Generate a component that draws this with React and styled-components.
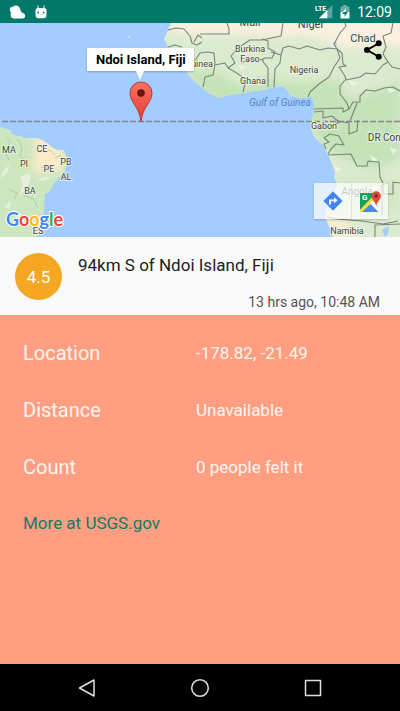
import React from "react";
import styled, { createGlobalStyle } from "styled-components";

const GlobalStyle = createGlobalStyle`
  *, *::before, *::after { box-sizing: border-box; }
  body { margin: 0; font-family: Roboto, "Liberation Sans", sans-serif; background: #000; }
  dl, dd, dt, h1, p { margin: 0; }
`;

const Screen = styled.div`
  display: flex;
  flex-direction: column;
  min-height: 100vh;
  background: #ff9e80;
`;

const StatusBar = styled.header`
  display: flex;
  align-items: center;
  justify-content: space-between;
  height: 23px;
  padding: 0 8px 0 9px;
  background: #00796b;
  color: #fff;
`;

const StatusGroup = styled.div`
  display: flex;
  align-items: center;
  gap: ${(p) => p.$gap}px;
`;

const Clock = styled.time`
  font-size: 14px;
  line-height: 23px;
  padding-top: 2px;
`;

const MapArea = styled.section`
  position: relative;
  height: 214px;
  overflow: hidden;
  background: #a3ccff;
`;

const MapDrawing = styled.svg`
  display: block;
  width: 100%;
  height: 100%;
`;

const Callout = styled.div`
  position: absolute;
  top: 25px;
  left: 87px;
  padding: 1px 8px 0 9px;
  background: #fff;
  color: #000;
  font-size: 13px;
  font-weight: 700;
  line-height: 22px;
  white-space: nowrap;
  box-shadow: 0 1px 2px rgba(0, 0, 0, 0.25);

  &::after {
    content: "";
    position: absolute;
    top: 100%;
    left: 50%;
    margin-left: -4px;
    border: 4px solid transparent;
    border-top: 9px solid #fff;
    border-bottom: 0;
  }
`;

const ShareButton = styled.button`
  position: absolute;
  top: 12px;
  right: 12px;
  display: grid;
  place-items: center;
  width: 30px;
  height: 30px;
  padding: 0;
  border: 0;
  background: none;
`;

const MapTools = styled.div`
  position: absolute;
  right: 12px;
  bottom: 18px;
  display: flex;
  background: rgba(255, 255, 255, 0.7);
  box-shadow: 0 1px 2px rgba(0, 0, 0, 0.2);
`;

const MapTool = styled.button`
  display: grid;
  place-items: center;
  width: 37px;
  height: 36px;
  padding: 0;
  border: 0;
  background: none;

  & + & {
    border-left: 1px solid rgba(0, 0, 0, 0.08);
  }
`;

const Summary = styled.section`
  display: flex;
  gap: 16px;
  height: 78px;
  padding: 16px 20px 4px 15px;
  background: #fafafa;
`;

const Magnitude = styled.div`
  display: grid;
  place-items: center;
  flex: none;
  width: 47px;
  height: 47px;
  border-radius: 50%;
  background: #f5a623;
  color: #fff;
  font-size: 17px;
`;

const SummaryText = styled.div`
  display: flex;
  flex: 1;
  flex-direction: column;
  justify-content: space-between;
`;

const Place = styled.h1`
  color: #212121;
  font-size: 17px;
  font-weight: 400;
  line-height: 24px;
`;

const When = styled.p`
  color: #555;
  font-size: 14px;
  line-height: 18px;
  text-align: right;
`;

const Details = styled.main`
  flex: 1;
  padding: 9px 24px 0 23px;
  color: #fff5f1;
`;

const DetailRow = styled.div`
  display: grid;
  grid-template-columns: 49% 1fr;
  align-items: center;
  min-height: 57px;
`;

const Label = styled.dt`
  font-size: 20px;
`;

const Value = styled.dd`
  font-size: 17px;
`;

const MoreLink = styled.a`
  display: inline-block;
  color: #0e7c6c;
  font-size: 17px;
  line-height: 57px;
  text-decoration: none;
`;

const NavBar = styled.nav`
  display: flex;
  justify-content: center;
  gap: 65px;
  height: 47px;
  background: #000;
`;

const NavButton = styled.button`
  display: grid;
  place-items: center;
  width: 48px;
  height: 47px;
  padding: 0;
  border: 0;
  background: none;
`;

const CloudIcon = () => (
  <svg width="17" height="14" viewBox="0 0 17 14" fill="#fff" aria-hidden="true">
    <circle cx="7" cy="5" r="4.4" />
    <circle cx="3.8" cy="4.8" r="3" />
    <circle cx="5" cy="9.8" r="3.5" />
    <path d="M4 5.500h7.300l2.200 2.500c1.700.2 2.700 1.300 2.700 2.700 0 1.700-1.200 2.700-2.800 2.700H4z" />
  </svg>
);

const AndroidIcon = () => (
  <svg width="12" height="14" viewBox="0 0 12 14" aria-hidden="true">
    <path d="M2.700 0.500 3.500 4M9.300.5 8.500 4" stroke="#fff" strokeWidth="1" />
    <path d="M0.500 5.500Q.5 3 3 3h6q2.500 0 2.500 2.500v4.500Q11.500 13.300 8.200 13.300H3.800Q.5 13.300.5 10z" fill="#fff" />
    <circle cx="3.300" cy="7.500" r="0.900" fill="#00796b" />
    <circle cx="8.700" cy="7.500" r="0.900" fill="#00796b" />
    <path d="M4.500 9.500h3" stroke="#8cc5be" strokeWidth="0.600" />
  </svg>
);

const SignalIcon = () => (
  <svg width="18" height="15" viewBox="0 0 18 15" aria-hidden="true">
    <path d="M17.300 1v13.300H4z" fill="#5aa59b" />
    <path d="M12.300 6v8.300H4z" fill="#fff" />
    <text x="0" y="7" fill="#fff" fontFamily="Roboto, sans-serif" fontSize="7" fontWeight="700">LTE</text>
  </svg>
);

const BatteryIcon = () => (
  <svg width="10" height="14" viewBox="0 0 10 14" aria-hidden="true">
    <path d="M3 0h4v1.500h2.500V7h-9V1.500H3z" fill="#68aca3" />
    <path d="M.5 7h9v6.500h-9z" fill="#fff" />
    <path d="M4.800 7h3L4.600 12V9H2.300L3.500 7z" fill="#00796b" />
    <path d="M5.700 3 2.900 7h2.600z" fill="#fff" />
  </svg>
);

const ShareIcon = () => (
  <svg width="20" height="22" viewBox="0 0 20 22" aria-hidden="true">
    <path d="M15.500 4.500 4 11l11.500 6.500" fill="none" stroke="#000" strokeWidth="2" />
    <circle cx="15.700" cy="4.300" r="3" />
    <circle cx="4" cy="11" r="3" />
    <circle cx="15.700" cy="17.700" r="3" />
  </svg>
);

const DirectionsIcon = () => (
  <svg width="20" height="20" viewBox="0 0 20 20" aria-hidden="true">
    <path d="M10 .8 19.200 10 10 19.200.8 10z" fill="#4285f4" stroke="#4285f4" strokeLinejoin="round" />
    <path d="M7 13.500V9.300h4.500" fill="none" stroke="#fff" strokeWidth="1.800" />
    <path d="M11 6.200v6l3.600-3z" fill="#fff" />
  </svg>
);

const MapsIcon = () => (
  <svg width="23" height="23" viewBox="0 0 23 23" aria-hidden="true">
    <path d="M1 3h19v19H1z" fill="#e5e7e8" />
    <path d="M1 3h17L1 20z" fill="#17a05d" />
    <path d="M1 20v2h3L20 6l-3-3z" fill="#fedb43" />
    <path d="M3 22l8.500-8 8 8z" fill="#4a89f3" />
    <path d="M11 13l2-2 7 8v3z" fill="#fff" />
    <text x="3" y="10" fill="#fff" fontFamily="Roboto, sans-serif" fontSize="8" fontWeight="700">G</text>
    <path d="M12.500 6a4.700 4.700 0 0 1 9.400 0c0 3.500-3.900 5-4.700 10-.8-5-4.700-6.500-4.700-10z" fill="#dc4b3e" />
    <circle cx="17.200" cy="6" r="1.700" fill="#7d231c" />
  </svg>
);

const placeLabels = [
  { text: "Mali", x: 250, y: 26, size: 11 },
  { text: "Niger", x: 311, y: 28, size: 11 },
  { text: "Chad", x: 363, y: 42, size: 11 },
  { text: "Burkina", x: 250, y: 52, size: 9 },
  { text: "Faso", x: 250, y: 62, size: 9 },
  { text: "Guinea", x: 199, y: 67, size: 9 },
  { text: "Nigeria", x: 304, y: 73, size: 9 },
  { text: "Ghana", x: 253, y: 84, size: 9 },
  { text: "Gabon", x: 324, y: 129, size: 9 },
  { text: "DR Congo", x: 390, y: 141, size: 10 },
  { text: "Angola", x: 357, y: 195, size: 10 },
  { text: "Namibia", x: 347, y: 234, size: 9 },
  { text: "MA", x: 9, y: 153, size: 9 },
  { text: "CE", x: 42, y: 152, size: 9 },
  { text: "PI", x: 24, y: 167, size: 9 },
  { text: "PE", x: 49, y: 172, size: 9 },
  { text: "PB", x: 66, y: 165, size: 9 },
  { text: "AL", x: 66, y: 180, size: 9 },
  { text: "BA", x: 30, y: 194, size: 9 },
  { text: "ES", x: 38, y: 234, size: 9 },
];

const africa =
  "M171 23 168 30 164 39 168 47 174 55 181 64 187 73 194 81 200 86 207 92 218 98 230 95 243 93 254 91 263 90 273 87 283 86 288 91 290 95 299 98 312 97 314 103 314 110 313 117 310 121 311 128 313 135 319 142 323 145 328 155 333 167 335 173 334 178 337 183 335 190 329 201 326 209 325 217 329 226 333 237H400V23z";
const brazil =
  "M0 127 10 130 13 135 20 136 25 138 37 138 44 141 53 148 58 150 63 150 66 155 67 160 66 166 65 171 60 177 55 182 49 192 45 194 44 210 43 220 40 228 37 237H0z";

const WorldMap = () => (
  <MapDrawing viewBox="0 23 400 214" preserveAspectRatio="xMidYMid slice" role="img" aria-label="Map of the Atlantic coast">
    <defs>
      <clipPath id="africa"><path d={africa} /></clipPath>
      <clipPath id="brazil"><path d={brazil} /></clipPath>
      <filter id="soft" x="-20%" y="-20%" width="140%" height="140%"><feGaussianBlur stdDeviation="4" /></filter>
      <linearGradient id="pin" x1="0" y1="0" x2="0" y2="1">
        <stop offset="0" stopColor="#fb7064" />
        <stop offset="1" stopColor="#e53a2a" />
      </linearGradient>
    </defs>
    <path d={africa} fill="#dcebcf" />
    <g clipPath="url(#africa)">
      <g filter="url(#soft)">
        <path d="M165 15H410V50L380 44 348 49 326 40 304 35 270 37 238 34 200 35 170 32z" fill="#faf0df" />
        <path d="M185 73 215 69 228 80 245 87 267 76 283 80 306 83 337 79 350 100 400 80V160L369 171 340 157 320 143 307 115 290 105 210 105z" fill="#c5e3b9" />
        <path d="M336 180 380 178 400 185V210L348 205z" fill="#d2e7c4" />
        <path d="M323 215 344 220 361 237H323z" fill="#f8ecd0" />
      </g>
      <path d="M239 65l7 2-5 3zM348 80l10 3-5 3zM387 87l9 4-7 2zM390 147l7 3-4 5zM370 155l8 5-5 2zM333 164l8 5-4 3zM367 190l11-4-1 7z" fill="#eef3df" />
      <path d="M333 43l3-1 1 3-2 1zM257 76l2 0 1 5-2-2zM386 126l2 6-1 4z M382 230l7-4-1 8-3 3z" fill="#a3ccff" />
    </g>
    <path d={brazil} fill="#cce6bf" />
    <g clipPath="url(#brazil)">
      <g filter="url(#soft)">
        <path d="M31 132 61 146 66 161 58 174 43 169 37 178 32 165 36 151z" fill="#fcebc8" />
      </g>
      <path d="M20 177l9-4 2 5-4 10-8 8 4-11zM3 171l6-6-1 8-8 5zM14 210l8 5 4 10-7-4zM37 180l9-4 5 2-8 3zM4 207l7-6-1 8z" fill="#e6efdc" />
      <path d="M18 139l4 9-2 8 6 5M7 137l3 5-5 10 4 8M43 153l7-3 5 5M55 158l6-3M41 167l9 0 6 7M10 190l7 3-3 6M24 196l10 3 4 9" fill="none" stroke="#aed0a2" />
    </g>
    <g fill="none" stroke="#7c8378" strokeWidth="1.100" strokeLinejoin="round">
      <path d="M168 30 176 28 184 29 190 36 192 43 197 45 202 42M168 47 175 45 182 47M194 42 198 35 202 38" />
      <path d="M187 59 194 62 200 53 207 52 214 53 215 64 213 75 205 77 203 87M215 65 225 63 228 68 235 63 231 56 237 49 244 44 250 40 262 40 281 36 283 23" />
      <path d="M200 34 229 34 229 29 227 23M228 68 235 72 241 76 245 84 243 92M241 63 253 58 261 60 265 58 272 58 275 52 268 48 268 41 262 39" />
      <path d="M271 52 281 55 280 63 275 69 274 87M268 87 268 68 264 63 262 59" />
      <path d="M281 55 283 48 289 46 299 49 307 46 320 50 328 48 337 49 340 58 334 67 329 77 319 84 310 92 308 97" />
      <path d="M337 49 334 44 340 33 346 26 345 23M337 49 342 53 343 64 346 66 339 67 345 76 346 80 360 77 366 73 375 74 383 65 388 62 383 54 386 47 383 36 391 33 393 23" />
      <path d="M388 62 392 67 400 69M345 80 340 86 340 94 347 103 349 109 343 112 343 108 314 109M314 112 323 111 323 118 332 116 340 123" />
      <path d="M314 129 336 125 338 121 349 123 349 134 357 131 358 120M326 149 324 144 329 142 324 138 330 134 339 136 341 140 344 145 336 144 331 149 328 154" />
      <path d="M349 109 353 102 360 102 360 96 366 90 375 91 384 88 393 87 400 91M357 103 350 121M328 155 351 154 357 166 367 166 368 161 379 162 380 177 383 183 383 194 393 194V182L400 183" />
      <path d="M327 217 337 219 362 221 383 224 398 221M375 237V225L400 224M388 183 382 185V215" />
    </g>
    <circle cx="129" cy="37" r="1" fill="#d5e6e6" />
    <path d="M2 121.500H400" stroke="#8c8093" strokeWidth="1.300" strokeDasharray="6 2" />
    <g fontFamily="Roboto, sans-serif" textAnchor="middle" fill="#3d4446" stroke="#f1f5e7" strokeWidth="2" strokeOpacity="0.800" paintOrder="stroke">
      {placeLabels.map((label) => (
        <text key={label.text} x={label.x} y={label.y} fontSize={label.size}>{label.text}</text>
      ))}
    </g>
    <text x="280" y="106" textAnchor="middle" fill="#5383c2" fontFamily="Roboto, sans-serif" fontSize="10" fontStyle="italic">Gulf of Guinea</text>
    <text x="6" y="226" fontFamily="Lato, sans-serif" fontSize="18" fontWeight="700" stroke="#fff" strokeWidth="2" paintOrder="stroke">
      <tspan fill="#4285f4">G</tspan><tspan fill="#ea4335">o</tspan><tspan fill="#fbbc05">o</tspan><tspan fill="#4285f4">g</tspan><tspan fill="#34a853">l</tspan><tspan fill="#ea4335">e</tspan>
    </text>
    <path d="M141 122C139.500 106 130 103 130 93a11 11 0 0 1 22 0c0 10-9.500 13-11 29z" fill="url(#pin)" stroke="#b83c32" />
    <circle cx="141" cy="93" r="3.800" fill="#65170f" />
  </MapDrawing>
);

const details = [
  ["Location", "-178.82, -21.49"],
  ["Distance", "Unavailable"],
  ["Count", "0 people felt it"],
];

export default function App() {
  return (
    <Screen>
      <GlobalStyle />
      <StatusBar>
        <StatusGroup $gap={9}>
          <CloudIcon />
          <AndroidIcon />
        </StatusGroup>
        <StatusGroup $gap={7}>
          <SignalIcon />
          <BatteryIcon />
          <Clock>12:09</Clock>
        </StatusGroup>
      </StatusBar>
      <MapArea>
        <WorldMap />
        <Callout>Ndoi Island, Fiji</Callout>
        <ShareButton type="button" aria-label="Share"><ShareIcon /></ShareButton>
        <MapTools>
          <MapTool type="button" aria-label="Directions"><DirectionsIcon /></MapTool>
          <MapTool type="button" aria-label="Open in Google Maps"><MapsIcon /></MapTool>
        </MapTools>
      </MapArea>
      <Summary>
        <Magnitude>4.5</Magnitude>
        <SummaryText>
          <Place>94km S of Ndoi Island, Fiji</Place>
          <When>13 hrs ago, 10:48 AM</When>
        </SummaryText>
      </Summary>
      <Details>
        <dl>
          {details.map(([label, value]) => (
            <DetailRow key={label}>
              <Label>{label}</Label>
              <Value>{value}</Value>
            </DetailRow>
          ))}
        </dl>
        <MoreLink href="#usgs">More at USGS.gov</MoreLink>
      </Details>
      <NavBar aria-label="System">
        <NavButton type="button" aria-label="Back">
          <svg width="20" height="20" viewBox="0 0 20 20" fill="none" stroke="#e0e0e0" strokeWidth="1.500" strokeLinejoin="round"><path d="M17 2v16L2.500 10z" /></svg>
        </NavButton>
        <NavButton type="button" aria-label="Home">
          <svg width="20" height="20" viewBox="0 0 20 20" fill="none" stroke="#e0e0e0" strokeWidth="1.500"><circle cx="10" cy="10" r="8.300" /></svg>
        </NavButton>
        <NavButton type="button" aria-label="Overview">
          <svg width="20" height="20" viewBox="0 0 20 20" fill="none" stroke="#e0e0e0" strokeWidth="1.500" strokeLinejoin="round"><path d="M2.500 2.500h15v15h-15z" /></svg>
        </NavButton>
      </NavBar>
    </Screen>
  );
}
